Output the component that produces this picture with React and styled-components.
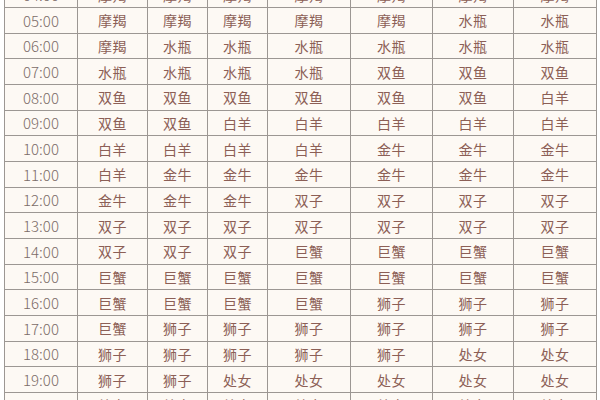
import React from "react";
import styled, { createGlobalStyle } from "styled-components";

const GlobalStyle = createGlobalStyle`
  html, body {
    margin: 0;
    padding: 0;
    background: #ffffff;
    overflow: hidden;
  }
`;

// cropped view of a long table
const Viewport = styled.div`
  width: 600px;
  height: 400px;
  overflow: hidden;
  padding-left: 4px;
  box-sizing: border-box;
`;

const Grid = styled.div`
  margin-top: -18.67px;
  display: grid;
  grid-template-columns: 72px 69px 59px 59px 82px 81px 80px 82px;
  grid-auto-rows: 24.67px;
  gap: 1px;
  padding: 1px;
  width: max-content;
  background: #9c9793;
  font-family: "Noto Sans CJK SC", "Noto Sans", sans-serif;
`;

const Cell = styled.div`
  background: #fdf9f4;
  display: flex;
  align-items: center;
  justify-content: center;
  font-size: ${(p) => (p.$time ? "15px" : "14px")};
  font-weight: ${(p) => (p.$time ? 300 : 400)};
  color: ${(p) => (p.$time ? "#7b6c68" : "#8c5f56")};
  letter-spacing: ${(p) => (p.$time ? "0" : "0.5px")};
  white-space: nowrap;
`;

const rows = [
  ["04:00", "摩羯", "摩羯", "摩羯", "摩羯", "摩羯", "摩羯", "摩羯"],
  ["05:00", "摩羯", "摩羯", "摩羯", "摩羯", "摩羯", "水瓶", "水瓶"],
  ["06:00", "摩羯", "水瓶", "水瓶", "水瓶", "水瓶", "水瓶", "水瓶"],
  ["07:00", "水瓶", "水瓶", "水瓶", "水瓶", "双鱼", "双鱼", "双鱼"],
  ["08:00", "双鱼", "双鱼", "双鱼", "双鱼", "双鱼", "双鱼", "白羊"],
  ["09:00", "双鱼", "双鱼", "白羊", "白羊", "白羊", "白羊", "白羊"],
  ["10:00", "白羊", "白羊", "白羊", "白羊", "金牛", "金牛", "金牛"],
  ["11:00", "白羊", "金牛", "金牛", "金牛", "金牛", "金牛", "金牛"],
  ["12:00", "金牛", "金牛", "金牛", "双子", "双子", "双子", "双子"],
  ["13:00", "双子", "双子", "双子", "双子", "双子", "双子", "双子"],
  ["14:00", "双子", "双子", "双子", "巨蟹", "巨蟹", "巨蟹", "巨蟹"],
  ["15:00", "巨蟹", "巨蟹", "巨蟹", "巨蟹", "巨蟹", "巨蟹", "巨蟹"],
  ["16:00", "巨蟹", "巨蟹", "巨蟹", "巨蟹", "狮子", "狮子", "狮子"],
  ["17:00", "巨蟹", "狮子", "狮子", "狮子", "狮子", "狮子", "狮子"],
  ["18:00", "狮子", "狮子", "狮子", "狮子", "狮子", "处女", "处女"],
  ["19:00", "狮子", "狮子", "处女", "处女", "处女", "处女", "处女"],
  ["20:00", "处女", "处女", "处女", "处女", "处女", "处女", "处女"],
];

const App = () => (
  <>
    <GlobalStyle />
    <Viewport>
      <Grid>
        {rows.map((row) =>
          row.map((v, i) => (
            <Cell key={row[0] + i} $time={i === 0}>
              {v}
            </Cell>
          ))
        )}
      </Grid>
    </Viewport>
  </>
);

export default App;
